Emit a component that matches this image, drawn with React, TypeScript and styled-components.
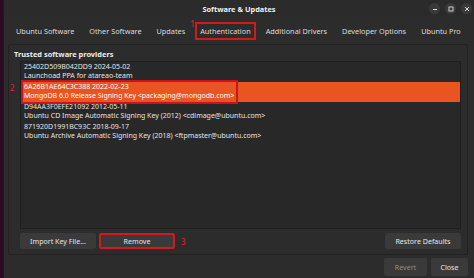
import React from "react";
import styled, { createGlobalStyle } from "styled-components";

const GlobalStyle = createGlobalStyle`
  html, body {
    margin: 0;
    padding: 0;
    background: #2a0b20;
    overflow: hidden;
  }
  * { box-sizing: border-box; }
`;

const keys = [
  { id: "25402D509B042DD9 2024-05-02", name: "Launchoad PPA for atareao-team" },
  { id: "6A26B1AE64C3C388 2022-02-23", name: "MongoDB 6.0 Release Signing Key <packaging@mongodb.com>", selected: true },
  { id: "D94AA3F0EFE21092 2012-05-11", name: "Ubuntu CD Image Automatic Signing Key (2012) <cdimage@ubuntu.com>" },
  { id: "871920D1991BC93C 2018-09-17", name: "Ubuntu Archive Automatic Signing Key (2018) <ftpmaster@ubuntu.com>" },
];

const tabs = [
  "Ubuntu Software",
  "Other Software",
  "Updates",
  "Authentication",
  "Additional Drivers",
  "Developer Options",
  "Ubuntu Pro",
];

export default function App() {
  return (
    <Desktop>
      <GlobalStyle />
      <Window>
        <TitleBar>
          <span />
          <Title>Software &amp; Updates</Title>
          <Controls>
            <CtrlButton>
              <svg width="6" height="6" viewBox="0 0 6 6">
                <path d="M1 3.5h4" stroke="#ddd" strokeWidth="1" />
              </svg>
            </CtrlButton>
            <CtrlButton>
              <svg width="6" height="6" viewBox="0 0 6 6">
                <rect x="1" y="1" width="4" height="4" fill="none" stroke="#ddd" strokeWidth="0.9" />
              </svg>
            </CtrlButton>
            <CtrlButton>
              <svg width="6" height="6" viewBox="0 0 6 6">
                <path d="M1 1l4 4M5 1l-4 4" stroke="#ddd" strokeWidth="1" />
              </svg>
            </CtrlButton>
          </Controls>
        </TitleBar>

        <TabBar>
          {tabs.map((t) => (
            <Tab key={t} $marked={t === "Authentication"}>
              {t}
              {t === "Authentication" && <Note $left={-7} $top={-6}>1</Note>}
            </Tab>
          ))}
        </TabBar>

        <Frame>
          <Heading>Trusted software providers</Heading>
          <KeyList>
            {keys.map((k) => (
              <KeyRow key={k.id} $selected={!!k.selected}>
                <KeyText $marked={!!k.selected}>
                  <div>{k.id}</div>
                  <div>{k.name}</div>
                </KeyText>
                {k.selected && <Note $left={-11} $top={0}>2</Note>}
              </KeyRow>
            ))}
          </KeyList>
          <ButtonRow>
            <Button>Import Key File...</Button>
            <Button $marked>
              Remove
              <Note $left={80} $top={1}>3</Note>
            </Button>
            <Spacer />
            <Button>Restore Defaults</Button>
          </ButtonRow>
        </Frame>

        <Footer>
          <Button $disabled $w={43}>Revert</Button>
          <Button $w={37}>Close</Button>
        </Footer>
      </Window>
    </Desktop>
  );
}

const Desktop = styled.div`
  width: 474px;
  height: 278px;
  padding-left: 3px;
  display: flex;
  font-family: "Noto Sans", "Open Sans", sans-serif;
  color: #e6e6e6;
`;

const Window = styled.div`
  flex: 1;
  min-width: 0;
  overflow: hidden;
  display: flex;
  flex-direction: column;
  background: #2c2c2c;
  border-left: 1px solid #1b1b1b;
`;

const TitleBar = styled.div`
  height: 17px;
  display: grid;
  grid-template-columns: 1fr auto 1fr;
  align-items: center;
  background: #2b2b2b;
`;

const Title = styled.div`
  font-size: 7.4px;
  font-weight: 700;
  color: #f0f0f0;
`;

const Controls = styled.div`
  display: flex;
  justify-content: flex-end;
  gap: 5px;
  padding-right: 2px;
`;

const CtrlButton = styled.div`
  width: 11px;
  height: 11px;
  border-radius: 50%;
  background: #3a3a3a;
  display: flex;
  align-items: center;
  justify-content: center;
`;

const TabBar = styled.div`
  height: 27px;
  display: flex;
  align-items: center;
  padding-left: 7px;
`;

const Tab = styled.div<{ $marked?: boolean }>`
  position: relative;
  font-size: 7.3px;
  color: #dcdcdc;
  height: 18px;
  display: flex;
  align-items: center;
  padding: 0 3px;
  margin-right: 5px;
  border: 2px solid ${(p) => (p.$marked ? "#d3191c" : "transparent")};
  white-space: nowrap;
`;

const Note = styled.span<{ $left: number; $top: number }>`
  position: absolute;
  left: ${(p) => p.$left}px;
  top: ${(p) => p.$top}px;
  font-size: 8px;
  color: #e0262a;
  font-weight: 400;
`;

const Frame = styled.div`
  margin: 0 6px 0 4px;
  height: 211px;
  border: 1px solid #222;
  border-radius: 2px;
  display: flex;
  flex-direction: column;
  padding: 3px 6px 0 5px;
`;

const Heading = styled.div`
  font-size: 7.4px;
  font-weight: 700;
  color: #ececec;
  height: 12px;
  line-height: 12px;
`;

const KeyList = styled.div`
  margin: 1px 0 0 6px;
  height: 168px;
  border: 1px solid #1e1e1e;
  background: #282828;
  display: flex;
  flex-direction: column;
`;

const KeyRow = styled.div<{ $selected?: boolean }>`
  position: relative;
  height: 20px;
  display: flex;
  align-items: center;
  background: ${(p) => (p.$selected ? "#e95420" : "transparent")};
`;

const KeyText = styled.div<{ $marked?: boolean }>`
  font-size: 7px;
  line-height: 8.6px;
  padding: 1px 2px 1px 1px;
  border: 2px solid ${(p) => (p.$marked ? "#c8141a" : "transparent")};
  color: ${(p) => (p.$marked ? "#fff" : "#e4e4e4")};
  white-space: nowrap;
`;

const ButtonRow = styled.div`
  display: flex;
  align-items: center;
  gap: 3px;
  padding: 4px 0 0 6px;
`;

const Spacer = styled.div`
  flex: 1;
`;

const Button = styled.div<{ $marked?: boolean; $disabled?: boolean; $w?: number }>`
  position: relative;
  height: ${(p) => (p.$w ? "18px" : "16px")};
  min-width: ${(p) => (p.$w ? `${p.$w}px` : "76px")};
  padding: 0 5px;
  display: flex;
  align-items: center;
  justify-content: center;
  font-size: 7.1px;
  border-radius: 2px;
  background: #3a3a3a;
  color: ${(p) => (p.$disabled ? "#8a8a8a" : "#e6e6e6")};
  border: ${(p) => (p.$marked ? "2px solid #d3191c" : "none")};
  white-space: nowrap;
`;

const Footer = styled.div`
  flex: 1;
  display: flex;
  justify-content: flex-end;
  align-items: center;
  gap: 4px;
  padding: 0 6px 0 0;
`;
